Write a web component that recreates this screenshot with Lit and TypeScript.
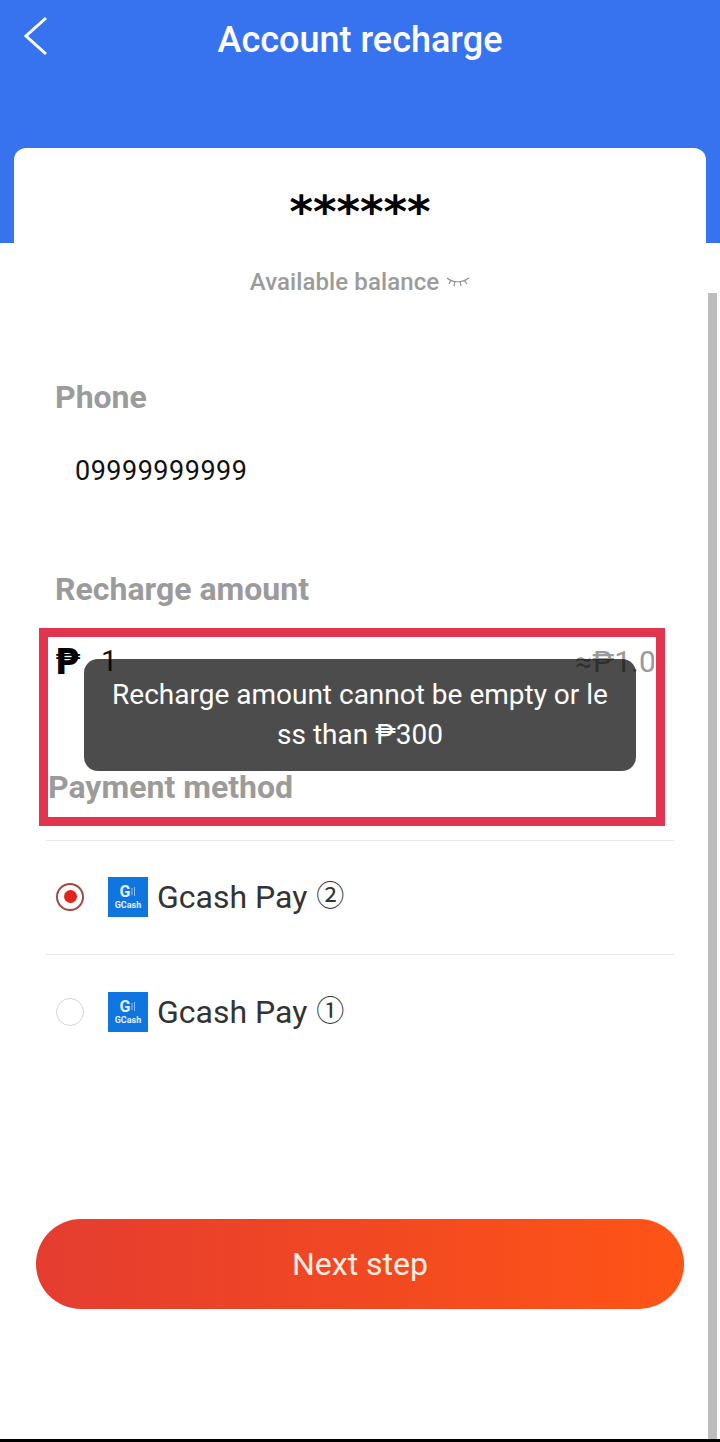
import { LitElement, html, css } from 'lit';
import { customElement } from 'lit/decorators.js';

const methods = [
  { label: 'Gcash Pay', mark: '②', checked: true },
  { label: 'Gcash Pay', mark: '①', checked: false },
];

@customElement('app-root')
export class AppRoot extends LitElement {
  static styles = css`
    :host {
      display: block;
      font-family: Roboto, 'Noto Sans', sans-serif;
    }
    .page {
      position: relative;
      width: 720px;
      height: 1442px;
      overflow: hidden;
      background: #fff;
      display: flex;
      flex-direction: column;
    }
    .header {
      height: 243px;
      flex: none;
      background: #3873ef;
      display: flex;
      flex-direction: column;
    }
    .topbar {
      height: 148px;
      flex: none;
      position: relative;
      text-align: center;
      color: #fff;
      font-size: 36px;
      font-weight: 500;
      line-height: 80px;
    }
    .back {
      position: absolute;
      left: 23px;
      top: 15px;
    }
    .card {
      flex: 1;
      margin: 0 14px;
      background: #fff;
      border-radius: 12px 12px 0 0;
      text-align: center;
      color: #000;
      font-size: 45px;
      font-weight: 700;
      line-height: 46px;
      padding-top: 41px;
      font-family: 'DejaVu Sans', sans-serif;
      box-sizing: border-box;
    }
    .balance {
      margin-top: 25px;
      height: 28px;
      display: flex;
      align-items: center;
      justify-content: center;
      gap: 7px;
      color: #9b9b9b;
      font-size: 24px;
      font-weight: 500;
      letter-spacing: 0.1px;
    }
    .label {
      color: #9b9b9b;
      font-size: 32px;
      font-weight: 700;
      line-height: 36px;
      padding-left: 55px;
    }
    .phone-label {
      margin-top: 83px;
    }
    .phone {
      margin-top: 36px;
      padding-left: 75px;
      font-size: 27px;
      line-height: 40px;
      color: #111;
      letter-spacing: 0.5px;
    }
    .amount-label {
      margin-top: 80px;
    }
    .amount {
      margin-top: 34px;
      height: 40px;
      display: flex;
      align-items: center;
      padding-left: 55px;
      width: 599px;
      overflow: hidden;
      font-size: 29px;
      color: #111;
      white-space: nowrap;
    }
    .peso {
      font-family: 'DejaVu Sans', sans-serif;
      font-weight: 700;
      font-size: 36px;
      color: #000;
      width: 46px;
      flex: none;
    }
    .approx {
      flex: none;
      margin-left: 458px;
      color: #999;
      font-size: 30px;
    }
    .method-label {
      margin-top: 88px;
      padding-left: 48px;
    }
    .methods {
      margin: 35px 46px 0;
    }
    .method {
      height: 114px;
      display: flex;
      align-items: center;
      border-top: 1px solid #e6e6e6;
      box-sizing: border-box;
      padding-left: 10px;
      color: #333;
      font-size: 32px;
    }
    .method:first-child {
      padding-bottom: 2px;
    }
    .mark {
      margin: 0 0 6px 9px;
      font-size: 28px;
      font-family: 'Noto Sans CJK SC', sans-serif;
    }
    .radio {
      width: 28px;
      height: 28px;
      border-radius: 50%;
      border: 1px solid #d5d5d5;
      box-sizing: border-box;
      flex: none;
      display: flex;
      align-items: center;
      justify-content: center;
    }
    .radio.on {
      border: 2px solid #a8483f;
    }
    .radio.on::after {
      content: '';
      width: 13px;
      height: 13px;
      border-radius: 50%;
      background: #e3241c;
    }
    .logo {
      width: 40px;
      height: 40px;
      background: #0f76e0;
      color: #e4f0fc;
      margin: 0 9px 0 24px;
      flex: none;
      display: flex;
      flex-direction: column;
      align-items: center;
      justify-content: center;
    }
    .logo-top {
      display: flex;
      align-items: center;
      gap: 1px;
      height: 17px;
    }
    .logo b {
      font-size: 16px;
      line-height: 17px;
    }
    .logo-word {
      font-size: 9px;
      line-height: 11px;
      font-weight: 700;
    }
    .next {
      margin: 151px 36px 0;
      height: 90px;
      border-radius: 45px;
      background: linear-gradient(90deg, #e43c30, #ff5416);
      color: #fdeee2;
      font-size: 32px;
      display: flex;
      align-items: center;
      justify-content: center;
    }
    .scrollbar {
      position: absolute;
      left: 708px;
      top: 293px;
      width: 9px;
      height: 1146px;
      background: #bdbdbd;
    }
    .bottom-line {
      position: absolute;
      left: 0;
      right: 0;
      bottom: 0;
      height: 3px;
      background: #000;
    }
    .highlight {
      position: absolute;
      left: 39px;
      top: 628px;
      width: 626px;
      height: 198px;
      border: 9px solid #e0344f;
      box-sizing: border-box;
    }
    .toast {
      position: absolute;
      left: 84px;
      top: 659px;
      width: 552px;
      height: 112px;
      box-sizing: border-box;
      padding: 16px 26px;
      border-radius: 14px;
      background: rgba(0, 0, 0, 0.7);
      color: #fff;
      font-size: 28px;
      line-height: 40px;
      text-align: center;
      word-break: break-all;
    }
  `;

  render() {
    return html`
      <div class="page">
        <div class="header">
          <div class="topbar">
            <svg class="back" width="26" height="42" viewBox="0 0 26 42" fill="none">
              <path d="M23 3 L3 21 L23 39" stroke="#fff" stroke-width="3" />
            </svg>
            Account recharge
          </div>
          <div class="card">******</div>
        </div>
        <div class="balance">
          Available balance
          <svg width="24" height="14" viewBox="0 0 24 14" fill="none" stroke="#8f8f8f" stroke-width="1.2">
            <path d="M1 3 C7 8 16 8 23 3 M5 5 L3 9 M9 6 L8 11 M14 6 L15 11 M18 5 L21 9" />
          </svg>
        </div>
        <div class="label phone-label">Phone</div>
        <div class="phone">09999999999</div>
        <div class="label amount-label">Recharge amount</div>
        <div class="amount">
          <span class="peso">₱</span>1
          <span class="approx">≈₱1.00</span>
        </div>
        <div class="label method-label">Payment method</div>
        <div class="methods">
          ${methods.map(
            m => html`
              <div class="method">
                <span class="radio ${m.checked ? 'on' : ''}"></span>
                <span class="logo">
                  <span class="logo-top">
                    <b>G</b>
                    <svg width="5" height="11" viewBox="0 0 5 11" fill="none" stroke="#8fc2f2" stroke-width="1">
                      <path d="M1 2 V9 M3.5 1 V10" />
                    </svg>
                  </span>
                  <span class="logo-word">GCash</span>
                </span>
                ${m.label}<span class="mark">${m.mark}</span>
              </div>
            `
          )}
        </div>
        <div class="next">Next step</div>
        <div class="highlight"></div>
        <div class="toast">Recharge amount cannot be empty or less than ₱300</div>
        <div class="scrollbar"></div>
        <div class="bottom-line"></div>
      </div>
    `;
  }
}
